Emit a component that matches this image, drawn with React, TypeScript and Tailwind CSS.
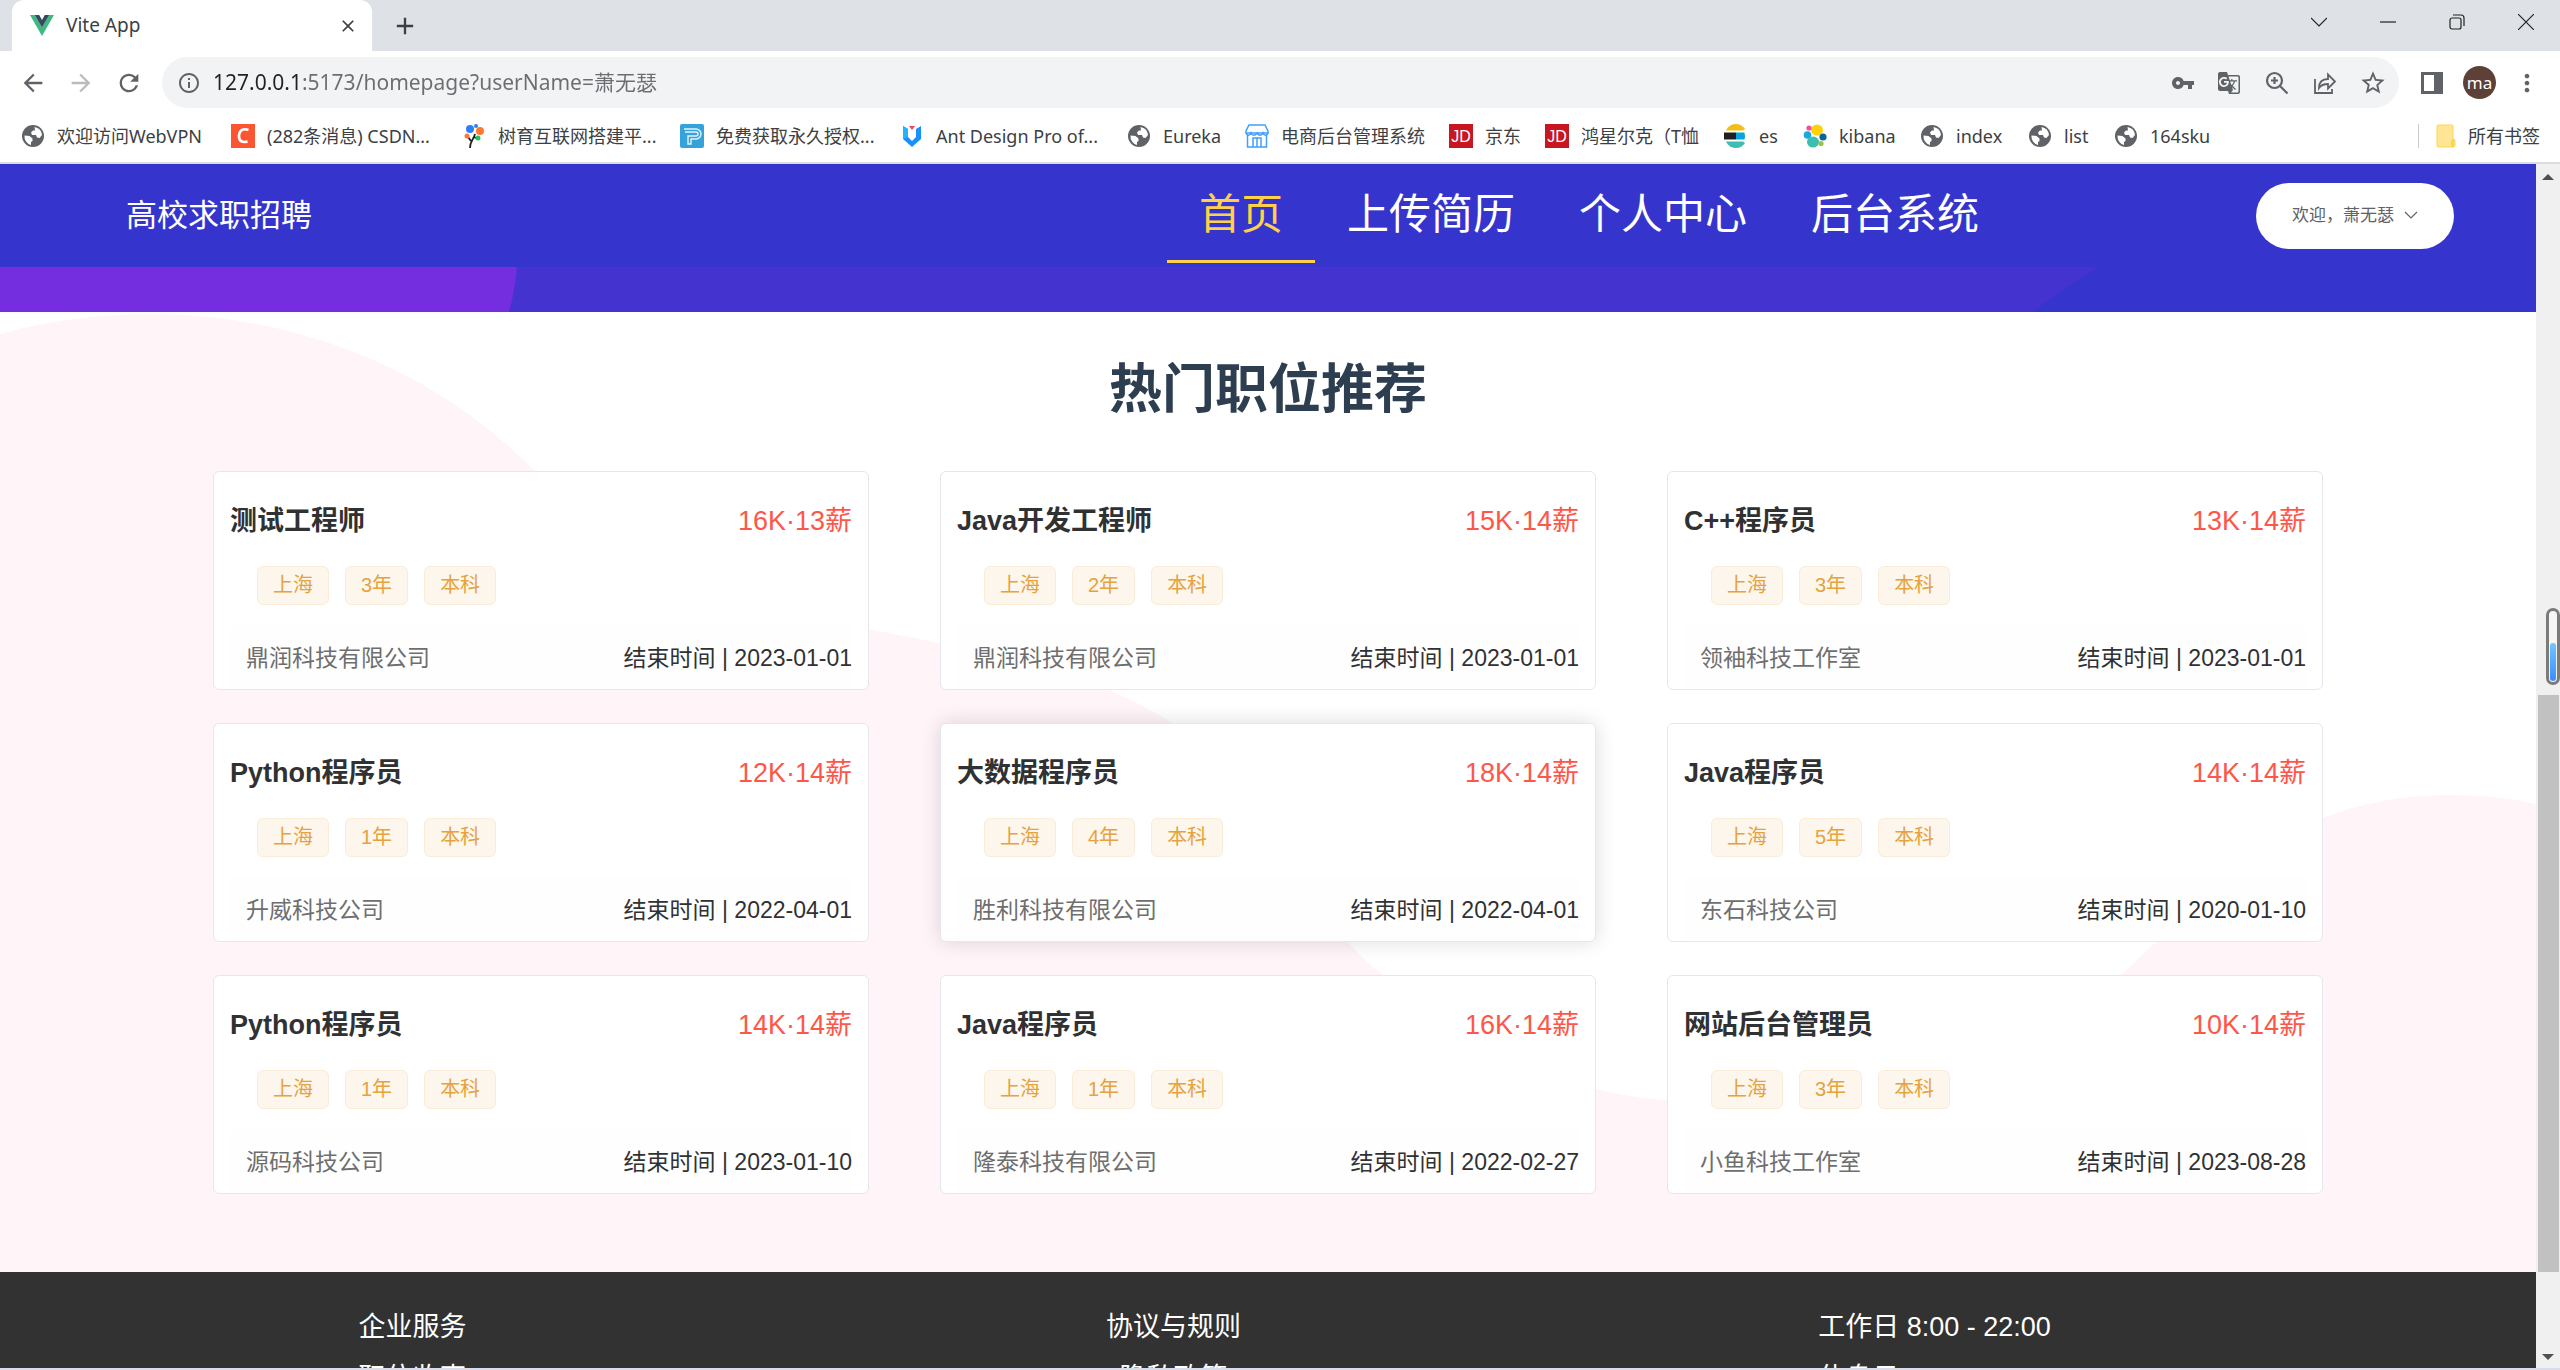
import React from "react";
import {
  MdAdd,
  MdArrowBack,
  MdArrowForward,
  MdClose,
  MdGTranslate,
  MdInfoOutline,
  MdMoreVert,
  MdRefresh,
  MdStarBorder,
  MdVpnKey,
} from "react-icons/md";

const navItems = ["首页", "上传简历", "个人中心", "后台系统"];

const jobs = [
  { title: "测试工程师", salary: "16K·13薪", years: "3年", company: "鼎润科技有限公司", end: "2023-01-01" },
  { title: "Java开发工程师", salary: "15K·14薪", years: "2年", company: "鼎润科技有限公司", end: "2023-01-01" },
  { title: "C++程序员", salary: "13K·14薪", years: "3年", company: "领袖科技工作室", end: "2023-01-01" },
  { title: "Python程序员", salary: "12K·14薪", years: "1年", company: "升威科技公司", end: "2022-04-01" },
  { title: "大数据程序员", salary: "18K·14薪", years: "4年", company: "胜利科技有限公司", end: "2022-04-01", active: true },
  { title: "Java程序员", salary: "14K·14薪", years: "5年", company: "东石科技公司", end: "2020-01-10" },
  { title: "Python程序员", salary: "14K·14薪", years: "1年", company: "源码科技公司", end: "2023-01-10" },
  { title: "Java程序员", salary: "16K·14薪", years: "1年", company: "隆泰科技有限公司", end: "2022-02-27" },
  { title: "网站后台管理员", salary: "10K·14薪", years: "3年", company: "小鱼科技工作室", end: "2023-08-28" },
];

const footerColumns = [
  ["企业服务", "职位收索"],
  ["协议与规则", "隐私政策"],
  ["工作日 8:00 - 22:00", "休息日 9:00 - 18:00"],
];

const Globe = () => (
  <svg viewBox="0 0 24 24" className="size-6 shrink-0">
    <circle cx="12" cy="12" r="11" fill="#5f6368" />
    <path
      d="M3.500 11.500l5 .5 3 2.500v2.500l-1.500 1v3a9 9 0 0 1-6.500-9.500zM13.500 3a9.200 9.200 0 0 1 7.500 8l-2.500 3-2.500-.5-1-2.500h-4l-1-2.500 2-2h2z"
      fill="#fff"
    />
  </svg>
);

const Csdn = () => (
  <svg viewBox="0 0 24 24" className="size-6 shrink-0">
    <rect width="24" height="24" fill="#fc5531" />
    <path d="M17.500 6c-5-2-9 0-9.500 5.500-.4 5.500 3 7.500 8.500 6" fill="none" stroke="#fff" strokeWidth="2.600" />
  </svg>
);

const Tree = () => (
  <svg viewBox="0 0 24 24" className="size-6 shrink-0">
    <path d="M8 24c0-7 4-9 5-14M9 17l-3-4M12 13l4 2" fill="none" stroke="#222" strokeWidth="1.800" />
    <circle cx="8" cy="5" r="4" fill="#2d7ff9" />
    <circle cx="14" cy="2" r="2" fill="#2d7ff9" />
    <circle cx="18" cy="7" r="4" fill="#ff7733" />
    <circle cx="5" cy="12" r="2.500" fill="#ff7733" />
    <circle cx="16" cy="14" r="2.500" fill="#22c55e" />
  </svg>
);

const Permit = () => (
  <svg viewBox="0 0 24 24" className="size-6 shrink-0">
    <rect width="24" height="24" rx="2" fill="#35a3d9" />
    <path d="M4 5h12a5 5 0 0 1 0 10h-5v5H8v-8h8a2 2 0 0 0 0-4H5" fill="none" stroke="#e4f5fd" strokeWidth="1.400" />
  </svg>
);

const AntPro = () => (
  <svg viewBox="0 0 24 24" className="size-6 shrink-0">
    <path d="M3 2l5 3v8l4 4 4-4V5l5-3v13l-9 8-9-8z" fill="#1890ff" />
    <path d="M3 2l5 3v8l-5 2z" fill="#22b5ff" />
    <path d="M9 2h6l-3 4z" fill="#f5455c" />
  </svg>
);

const Shop = () => (
  <svg viewBox="0 0 24 24" className="size-6 shrink-0" fill="none" stroke="#409eff" strokeWidth="1.500">
    <path d="M4 1h16l3 6v2H1V7zM2.500 11v12h19V11M8 23v-9h8v9M12 14v9" />
    <path d="M1 9c1 3 4 3 5 0 1 3 4 3 6 0 2 3 5 3 6 0 1 3 4 3 5 0" />
  </svg>
);

const Jd = () => (
  <svg viewBox="0 0 24 24" className="size-6 shrink-0">
    <rect width="24" height="24" fill="#c81623" />
    <text x="12" y="18" fontSize="16" textAnchor="middle" fill="#fff" fontFamily="Liberation Sans, sans-serif">
      JD
    </text>
  </svg>
);

const Elastic = () => (
  <svg viewBox="0 0 24 24" className="size-6 shrink-0">
    <path d="M3 6.500C5 2 9 0 13 0c4 0 7 2 9 5l-2 1.500z" fill="#f0bf1a" />
    <path d="M1 8.500h12v7H1z" fill="#231f20" />
    <path d="M13 8.500h8c1 0 1.500 7 0 7h-8z" fill="#07a5de" />
    <path d="M3 17.500h17l2 1.500c-2 3-5 5-9 5s-8-2-10-6.500z" fill="#3ebeb0" />
  </svg>
);

const Kibana = () => (
  <svg viewBox="0 0 24 24" className="size-6 shrink-0">
    <ellipse cx="14" cy="6" rx="6" ry="5.500" fill="#fed10a" />
    <circle cx="6" cy="4" r="2.600" fill="#ef5098" />
    <circle cx="4.500" cy="11" r="3.800" fill="#17a8e0" />
    <circle cx="20" cy="13" r="3.600" fill="#07659b" />
    <ellipse cx="10" cy="18" rx="6" ry="5.500" fill="#3cbeb1" />
    <circle cx="18" cy="19.500" r="2.600" fill="#93c83e" />
  </svg>
);

const bookmarks = [
  { label: "欢迎访问WebVPN", icon: Globe, width: "w-[210px]" },
  { label: "(282条消息) CSDN...", icon: Csdn, width: "w-[231px]" },
  { label: "树育互联网搭建平...", icon: Tree, width: "w-[218px]" },
  { label: "免费获取永久授权...", icon: Permit, width: "w-[220px]" },
  { label: "Ant Design Pro of...", icon: AntPro, width: "w-[227px]" },
  { label: "Eureka", icon: Globe, width: "w-[118px]" },
  { label: "电商后台管理系统", icon: Shop, width: "w-[204px]" },
  { label: "京东", icon: Jd, width: "w-[96px]" },
  { label: "鸿星尔克（T恤", icon: Jd, width: "w-[178px]" },
  { label: "es", icon: Elastic, width: "w-[80px]" },
  { label: "kibana", icon: Kibana, width: "w-[117px]" },
  { label: "index", icon: Globe, width: "w-[108px]" },
  { label: "list", icon: Globe, width: "w-[86px]" },
  { label: "164sku", icon: Globe, width: "w-[110px]" },
];

function TabStrip() {
  return (
    <div className="flex h-[51px] items-stretch bg-[#dee1e6]">
      <div className="ml-3 flex w-[360px] items-center rounded-t-xl bg-white pr-[14px] pl-[18px]">
        <svg viewBox="0 0 24 21" className="h-[21px] w-6">
          <path d="M0 0h4.800L12 12.500 19.200 0H24L12 21z" fill="#41b883" />
          <path d="M4.800 0h4.400L12 5l2.800-5h4.400L12 12.500z" fill="#34495e" />
        </svg>
        <span className="ml-3 text-[19px] text-[#3c4043]">Vite App</span>
        <button aria-label="关闭标签页" className="ml-auto">
          <MdClose className="size-5 text-[#3c4043]" />
        </button>
      </div>
      <button aria-label="新标签页" className="ml-[19px]">
        <MdAdd className="size-7 text-[#3c4043]" />
      </button>
      <div className="ml-auto flex items-center gap-[53px] pr-[26px] pb-2 text-[#222]">
        <button aria-label="搜索标签页">
          <svg viewBox="0 0 16 16" className="size-4" fill="none" stroke="currentColor" strokeWidth="1.200">
            <path d="M0 4l8 8 8-8" />
          </svg>
        </button>
        <button aria-label="最小化">
          <svg viewBox="0 0 16 16" className="size-4" fill="none" stroke="currentColor" strokeWidth="1.200">
            <path d="M0 8h16" />
          </svg>
        </button>
        <button aria-label="还原">
          <svg viewBox="0 0 16 16" className="size-4" fill="none" stroke="currentColor" strokeWidth="1.200">
            <rect x="1" y="4" width="11" height="11" rx="2" />
            <path d="M4 1h8a3 3 0 0 1 3 3v8" />
          </svg>
        </button>
        <button aria-label="关闭">
          <svg viewBox="0 0 16 16" className="size-4" fill="none" stroke="currentColor" strokeWidth="1.200">
            <path d="M0 0l16 16M16 0L0 16" />
          </svg>
        </button>
      </div>
    </div>
  );
}

function Toolbar() {
  return (
    <div className="flex items-center bg-white py-1.5 pr-[19px] pl-[19px] text-[#5f6368]">
      <div className="flex gap-5">
        <button aria-label="后退">
          <MdArrowBack className="size-7" />
        </button>
        <button aria-label="前进">
          <MdArrowForward className="size-7 text-[#babcbe]" />
        </button>
        <button aria-label="重新加载">
          <MdRefresh className="size-7" />
        </button>
      </div>
      <div className="ml-[19px] flex h-[51px] flex-1 items-center rounded-full bg-[#f1f3f4] pr-3 pl-[15px]">
        <MdInfoOutline className="size-6" />
        <input
          aria-label="地址栏"
          defaultValue="127.0.0.1:5173/homepage?userName=萧无瑟"
          className="ml-3 flex-1 bg-[linear-gradient(90deg,#202124_90px,#6a6d71_90px)] bg-clip-text text-[21px] text-transparent outline-none"
        />
        <div className="flex items-center gap-[22px]">
          <MdVpnKey className="size-6" />
          <MdGTranslate className="size-6" />
          <svg viewBox="0 0 28 28" className="size-7" fill="none" stroke="currentColor" strokeWidth="2.200">
            <circle cx="11.500" cy="11.500" r="7.500" />
            <path d="M17 17l7.500 7.500M11.500 8v7M8 11.500h7" />
          </svg>
          <svg viewBox="0 0 24 24" className="size-6" fill="none" stroke="currentColor" strokeWidth="1.800">
            <path d="M2 8v14h17v-4" />
            <path d="M6 17c0-6 3-9 9-9V3.500l7 7-7 7V13c-4 0-7 1-9 4z" />
          </svg>
          <MdStarBorder className="size-7" />
        </div>
      </div>
      <button aria-label="侧边栏" className="ml-[22px]">
        <svg viewBox="0 0 22 22" className="size-[22px]">
          <path d="M0 0h22v22H0zM3 3v16h10V3z" fill="currentColor" fillRule="evenodd" />
        </svg>
      </button>
      <button className="ml-5 size-[33px] rounded-full bg-[#5d4037] text-[17px] leading-none text-white">ma</button>
      <button aria-label="更多" className="ml-[17px]">
        <MdMoreVert className="size-7" />
      </button>
    </div>
  );
}

function Bookmarks() {
  return (
    <div className="flex h-[50px] items-center border-b-2 border-[#dadce0] bg-white pr-5 pb-1 pl-[21px] text-lg text-[#3c4043]">
      {bookmarks.map((item) => {
        const Icon = item.icon;
        return (
          <a href="#" key={item.label} className={`flex shrink-0 items-center gap-3 whitespace-nowrap ${item.width}`}>
            <Icon />
            {item.label}
          </a>
        );
      })}
      <a href="#" className="ml-auto flex shrink-0 items-center whitespace-nowrap">
        <span className="h-6 w-px bg-[#c8cace]" />
        <svg viewBox="0 0 20 24" className="mr-3 ml-[17px] h-6 w-5">
          <path d="M2 1h14a1 1 0 0 1 1 1v12l2 2v6l-1 1H2a1 1 0 0 1-1-1V2a1 1 0 0 1 1-1z" fill="#ffe694" stroke="#f9d94f" />
          <path d="M15 23v-7l3-1v8z" fill="#ffd54a" />
        </svg>
        所有书签
      </a>
    </div>
  );
}

function Header() {
  return (
    <header className="flex h-[103px] items-center bg-[#3535cd] pr-[82px] pl-[126px] text-white">
      <span className="mr-auto pt-0.5 text-[31px]">高校求职招聘</span>
      <nav className="mr-[245px] flex self-start">
        {navItems.map((item, i) => (
          <a
            href="#"
            key={item}
            className={`h-[99px] border-b-3 px-8 pt-1.5 text-[42px] leading-[90px] ${
              i === 0 ? "border-[#ffd04b] text-[#ffd04b]" : "border-transparent"
            }`}
          >
            {item}
          </a>
        ))}
      </nav>
      <button className="flex h-[66px] w-[198px] items-center justify-center gap-2.5 rounded-[33px] bg-white text-[17px] text-[#606266]">
        欢迎，萧无瑟
        <svg viewBox="0 0 14 14" className="size-3.5" fill="none" stroke="currentColor" strokeWidth="1.200">
          <path d="M1 3l6 6 6-6" />
        </svg>
      </button>
    </header>
  );
}

function JobCard({ job }: { job: (typeof jobs)[number] }) {
  return (
    <article
      className={`rounded-md border border-[#e4e7ed] bg-white px-4 pt-[31px] ${
        job.active ? "shadow-[0_0_20px_rgba(0,0,0,0.14)]" : ""
      }`}
    >
      <div className="flex justify-between text-[27px] leading-9">
        <h3 className="font-bold text-[#303133]">{job.title}</h3>
        <span className="text-[#fe574a]">{job.salary}</span>
      </div>
      <div className="mt-[27px] ml-[27px] flex gap-4">
        {["上海", job.years, "本科"].map((tag) => (
          <span
            key={tag}
            className="h-[39px] rounded-md border border-[#faecd8] bg-[#fdf6ec] px-[15px] text-xl leading-[37px] text-[#e6a23c]"
          >
            {tag}
          </span>
        ))}
      </div>
      <div className="mt-5 flex h-16 items-center justify-between bg-[#fefefe] pt-0.5 pl-4 text-[23px]">
        <span className="text-[#6e6e6e]">{job.company}</span>
        <span className="text-[#303133]">结束时间 | {job.end}</span>
      </div>
    </article>
  );
}

function Scrollbar() {
  return (
    <div className="relative flex w-6 flex-col items-center bg-[#f0f0f0] pt-2.5 pb-2">
      <svg viewBox="0 0 12 6" className="h-1.5 w-3">
        <path d="M0 6l6-6 6 6z" fill="#505050" />
      </svg>
      <div className="flex-[515]" />
      <div className="w-[21px] flex-[577] bg-[#c1c1c1]" />
      <div className="flex-[82]" />
      <svg viewBox="0 0 12 6" className="h-1.5 w-3">
        <path d="M0 0h12L6 6z" fill="#505050" />
      </svg>
      {/* side widget sitting on the screen edge */}
      <div className="absolute top-[444px] right-0 flex h-[77px] w-3.5 items-end rounded-full border-3 border-[#7b7b7b] bg-[#f5f5f5] p-px">
        <div className="h-[38px] w-full rounded-full bg-linear-to-b from-[#74c4ff] to-[#3d8bff]" />
      </div>
    </div>
  );
}

export default function App() {
  return (
    <div className="flex h-screen flex-col overflow-hidden bg-[#d9dcea] pb-0.5 font-['Noto_Sans','Noto_Sans_CJK_SC',sans-serif]">
      <TabStrip />
      <Toolbar />
      <Bookmarks />
      <div className="flex min-h-0 flex-1 bg-white font-['Liberation_Sans','Noto_Sans_CJK_SC',sans-serif]">
        <main className="flex-1 overflow-hidden">
          <Header />
          <svg viewBox="0 0 2536 45" preserveAspectRatio="none" className="block h-[45px] w-full bg-[#3535cd]">
            <path d="M0 0h2100q-36 20-67 45H0z" fill="#4433cf" />
            <path d="M0 0h517q-2 24-8 45H0z" fill="#742ddf" />
          </svg>
          <section className="relative px-[213px] pt-[43px] pb-[78px]">
            <svg viewBox="0 0 2536 960" preserveAspectRatio="none" className="absolute inset-0 size-full">
              <path
                d="M0 22C50 8 100 2 150 2C290 2 430 52 535 159C620 235 700 285 869 317C960 335 1040 350 1107 377C1135 389 1155 400 1172 411C1250 470 1290 565 1348 630C1360 643 1370 653 1383 663C1440 725 1510 760 1597 777C1620 783 1640 786 1667 788C1860 800 2020 770 2121 663L2156 630C2210 575 2260 532 2323 506C2365 489 2410 483 2451 483C2480 483 2510 486 2536 492V960H0z"
                fill="#fff5f8"
              />
            </svg>
            <h2 className="relative text-center text-[53px] leading-[70px] font-bold text-[#2c3e50]">热门职位推荐</h2>
            <div className="relative mt-[46px] grid grid-cols-3 gap-x-[71px] gap-y-[33px]">
              {jobs.map((job, i) => (
                <JobCard job={job} key={i} />
              ))}
            </div>
          </section>
          <footer className="grid grid-cols-3 bg-[#323232] pt-[30px] pr-[221px] pb-8 pl-8 text-center text-[27px] leading-[51px] text-white">
            {footerColumns.map((column) => (
              <div key={column[0]}>
                {column.map((line) => (
                  <p key={line}>{line}</p>
                ))}
              </div>
            ))}
          </footer>
        </main>
        <Scrollbar />
      </div>
    </div>
  );
}
